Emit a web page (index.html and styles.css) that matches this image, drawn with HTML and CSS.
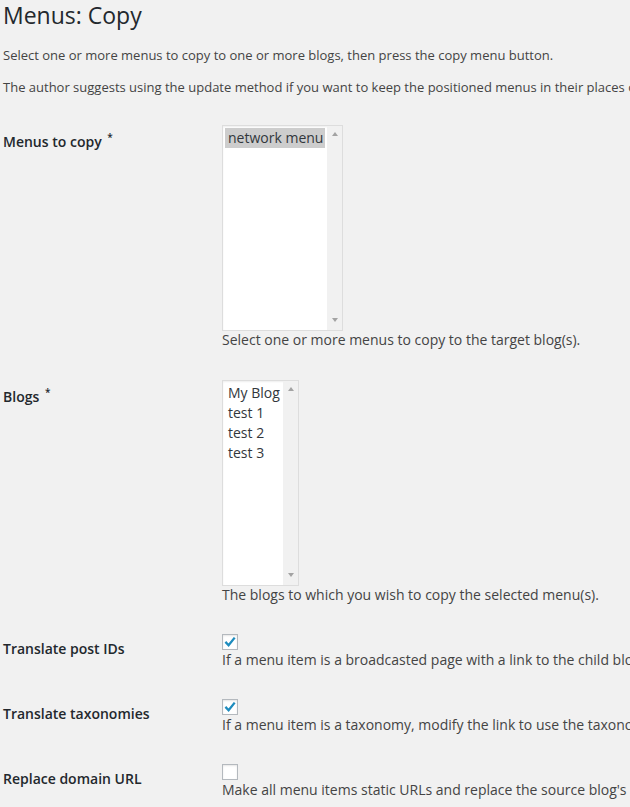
FILE: index.html
```html
<!DOCTYPE html>
<html lang="en">
<head>
<meta charset="utf-8">
<title>Menus: Copy</title>
<link rel="stylesheet" href="styles.css">
</head>
<body>
<div class="wrap">
  <h2 class="page-title">Menus: Copy</h2>
  <p class="intro">Select one or more menus to copy to one or more blogs, then press the copy menu button.</p>
  <p class="intro second">The author suggests using the update method if you want to keep the positioned menus in their places on the target blogs.</p>

  <div class="form-table">
    <div class="row row-select">
      <div class="th"><span class="label">Menus to copy <sup class="req">*</sup></span></div>
      <div class="td">
        <div class="listbox listbox-menus" role="listbox" aria-multiselectable="true">
          <div class="options">
            <div class="option selected" role="option">network menu</div>
          </div>
          <div class="scrollbar"><span class="arrow-up"></span><span class="arrow-down"></span></div>
        </div>
        <p class="description first-desc">Select one or more menus to copy to the target blog(s).</p>
      </div>
    </div>

    <div class="row row-select">
      <div class="th"><span class="label">Blogs <sup class="req">*</sup></span></div>
      <div class="td">
        <div class="listbox listbox-blogs" role="listbox" aria-multiselectable="true">
          <div class="options">
            <div class="option" role="option">My Blog</div>
            <div class="option" role="option">test 1</div>
            <div class="option" role="option">test 2</div>
            <div class="option" role="option">test 3</div>
          </div>
          <div class="scrollbar"><span class="arrow-up"></span><span class="arrow-down"></span></div>
        </div>
        <p class="description">The blogs to which you wish to copy the selected menu(s).</p>
      </div>
    </div>

    <div class="row row-check">
      <div class="th"><span class="label">Translate post IDs</span></div>
      <div class="td">
        <span class="checkbox checked"><svg viewBox="0 0 16 16" width="16" height="16"><path d="M3.4 7.9 L6.6 11.2 L12.7 3.6" fill="none" stroke="#1e8cbe" stroke-width="2.3" stroke-linecap="butt" stroke-linejoin="miter"/></svg></span>
        <p class="description">If a menu item is a broadcasted page with a link to the child blog's equivalent page, translate the link.</p>
      </div>
    </div>

    <div class="row row-check">
      <div class="th"><span class="label">Translate taxonomies</span></div>
      <div class="td">
        <span class="checkbox checked"><svg viewBox="0 0 16 16" width="16" height="16"><path d="M3.4 7.9 L6.6 11.2 L12.7 3.6" fill="none" stroke="#1e8cbe" stroke-width="2.3" stroke-linecap="butt" stroke-linejoin="miter"/></svg></span>
        <p class="description">If a menu item is a taxonomy, modify the link to use the taxonomy on the child blog.</p>
      </div>
    </div>

    <div class="row row-check">
      <div class="th"><span class="label">Replace domain URL</span></div>
      <div class="td">
        <span class="checkbox"></span>
        <p class="description">Make all menu items static URLs and replace the source blog's domain with the target blog's domain.</p>
      </div>
    </div>
  </div>
</div>
</body>
</html>
```

FILE: styles.css
```css
html, body {
  margin: 0;
  padding: 0;
  background: #f1f1f1;
  overflow: hidden;
}

body {
  font-family: "Open Sans", "Liberation Sans", sans-serif;
  font-size: 13px;
  color: #444;
  width: 630px;
  height: 807px;
}

.wrap {
  padding-left: 3px;
  white-space: nowrap;
}

.page-title {
  margin: 0;
  padding-top: 1px;
  font-size: 23px;
  font-weight: 400;
  line-height: 29px;
  color: #23282d;
}

.intro {
  margin: 16px 0 0;
  font-size: 13px;
  line-height: 19.5px;
}

.intro.second {
  margin-top: 12px;
}

.form-table {
  margin-top: 13px;
  display: flex;
  flex-direction: column;
}

.row {
  display: flex;
}

.th {
  width: 219px;
  flex: none;
  padding-top: 21px;
}

.row-select .th {
  padding-top: 23px;
}

.label {
  font-size: 14px;
  font-weight: 600;
  line-height: 18.2px;
  color: #23282d;
}

.req {
  font-size: 10px;
  line-height: 0;
  vertical-align: 6px;
  margin-left: 2px;
}

.td {
  padding: 15px 0;
  font-size: 14px;
}

.listbox {
  display: flex;
  height: 206px;
  box-sizing: border-box;
  border: 1px solid #ddd;
  background: #fff;
  box-shadow: inset 0 1px 2px rgba(0, 0, 0, 0.07);
}

.listbox-menus { width: 121px; }
.listbox-blogs { width: 77px; }

.options {
  flex: 1;
  padding: 2px;
}

.option {
  height: 20px;
  line-height: 20px;
  padding-left: 3px;
  font-size: 14px;
  color: #32373c;
}

.option.selected {
  background: #cdcdcd;
}

.scrollbar {
  width: 15px;
  flex: none;
  background: #f1f1f1;
  display: flex;
  flex-direction: column;
  justify-content: space-between;
  align-items: center;
  padding: 6px 0 8px;
  box-sizing: border-box;
}

.arrow-up {
  width: 0;
  height: 0;
  border-left: 3.5px solid transparent;
  border-right: 3.5px solid transparent;
  border-bottom: 4px solid #a3a3a3;
}

.arrow-down {
  width: 0;
  height: 0;
  border-left: 3.5px solid transparent;
  border-right: 3.5px solid transparent;
  border-top: 4px solid #a3a3a3;
}

.description {
  margin: 0;
  font-size: 14px;
  line-height: 18px;
  color: #444;
}

.first-desc {
  padding-bottom: 1px;
}

.checkbox {
  display: block;
  width: 16px;
  height: 16px;
  box-sizing: border-box;
  border: 1px solid #b4b9be;
  background: #fff;
  box-shadow: inset 0 1px 2px rgba(0, 0, 0, 0.1);
  margin-bottom: 1px;
}

.checkbox svg {
  display: block;
  margin: -1px;
}
```
